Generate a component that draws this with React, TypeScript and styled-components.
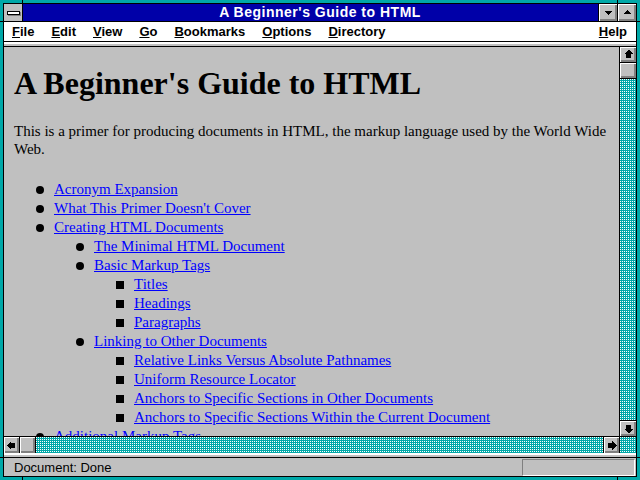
import * as React from 'react';
import styled, { createGlobalStyle, css } from 'styled-components';

const TEAL = '#00a8a8';
const GRAY = '#c0c0c0';
const DARK = '#808080';
const BLUE = '#0000a8';

const GlobalStyle = createGlobalStyle`
  html, body {
    margin: 0;
    padding: 0;
    overflow: hidden;
    background: ${TEAL};
  }
`;

type Item = { label: string; children?: Item[] };

const contents: Item[] = [
  { label: 'Acronym Expansion' },
  { label: "What This Primer Doesn't Cover" },
  {
    label: 'Creating HTML Documents',
    children: [
      { label: 'The Minimal HTML Document' },
      {
        label: 'Basic Markup Tags',
        children: [{ label: 'Titles' }, { label: 'Headings' }, { label: 'Paragraphs' }],
      },
      {
        label: 'Linking to Other Documents',
        children: [
          { label: 'Relative Links Versus Absolute Pathnames' },
          { label: 'Uniform Resource Locator' },
          { label: 'Anchors to Specific Sections in Other Documents' },
          { label: 'Anchors to Specific Sections Within the Current Document' },
        ],
      },
    ],
  },
  { label: 'Additional Markup Tags' },
];

const menus = ['File', 'Edit', 'View', 'Go', 'Bookmarks', 'Options', 'Directory'];

// win 3.1 style arrows, drawn on a 15x15 grid
const ScrollArrow = ({ dir }: { dir: 'up' | 'down' | 'left' | 'right' }) => {
  const rot = { up: 0, right: 90, down: 180, left: 270 }[dir];
  return (
    <svg width="15" height="15" viewBox="0 0 15 15" shapeRendering="crispEdges">
      <g transform={`rotate(${rot} 7.5 7.5)`}>
        <path d="M7.5 2.5 L12 7 L10 7 L10 11 L5 11 L5 7 L3 7 Z" fill="#000" />
      </g>
    </svg>
  );
};

const Triangle = ({ dir }: { dir: 'up' | 'down' }) => (
  <svg width="17" height="15" viewBox="0 0 17 15" shapeRendering="crispEdges">
    {dir === 'down' ? (
      <path d="M4.5 6 L12.5 6 L8.5 10 Z" fill="#000" />
    ) : (
      <path d="M8.5 5 L12.5 9 L4.5 9 Z" fill="#000" />
    )}
  </svg>
);

class App extends React.Component {
  renderList(items: Item[], level: number) {
    return (
      <List $level={level}>
        {items.map((item) => (
          <li key={item.label}>
            <Row>
              <Bullet $square={level >= 2} />
              <Link href="#">{item.label}</Link>
            </Row>
            {item.children && this.renderList(item.children, level + 1)}
          </li>
        ))}
      </List>
    );
  }

  render() {
    return (
      <Frame>
        <GlobalStyle />
        <Mark $v $x={22} $y={0} />
        <Mark $v $x={617} $y={0} />
        <Mark $v $x={22} $y={476} />
        <Mark $v $x={617} $y={476} />
        <Mark $x={0} $y={21} />
        <Mark $x={636} $y={21} />
        <Mark $x={0} $y={457} />
        <Mark $x={636} $y={457} />
        <Window>
          <TitleBar>
            <ControlBox>
              <ControlBar />
            </ControlBox>
            <Caption>A Beginner's Guide to HTML</Caption>
            <TitleButton>
              <Triangle dir="down" />
            </TitleButton>
            <TitleButton>
              <Triangle dir="up" />
            </TitleButton>
          </TitleBar>
          <MenuBar>
            {menus.map((m) => (
              <MenuItem key={m}>
                <u>{m[0]}</u>
                {m.slice(1)}
              </MenuItem>
            ))}
            <MenuItem $right>
              <u>H</u>elp
            </MenuItem>
          </MenuBar>
          <Divider />
          <Viewport>
            <Page>
              <Heading>A Beginner's Guide to HTML</Heading>
              <Intro>
                This is a primer for producing documents in HTML, the markup language used by the
                World Wide Web.
              </Intro>
              {this.renderList(contents, 0)}
            </Page>
            <VScroll>
              <ScrollButton $v>
                <ScrollArrow dir="up" />
              </ScrollButton>
              <Thumb $v />
              <Track />
              <ScrollButton $v $end>
                <ScrollArrow dir="down" />
              </ScrollButton>
            </VScroll>
            <HScroll>
              <ScrollButton>
                <ScrollArrow dir="left" />
              </ScrollButton>
              <Thumb />
              <Track />
              <ScrollButton $end>
                <ScrollArrow dir="right" />
              </ScrollButton>
            </HScroll>
            <Corner />
          </Viewport>
          <Divider />
          <StatusBar>
            <StatusText>Document: Done</StatusText>
            <Progress />
          </StatusBar>
        </Window>
      </Frame>
    );
  }
}

const bevel = css`
  background: ${GRAY};
  box-shadow: inset 1px 1px #fff, inset -1px -1px ${DARK}, inset -2px -2px ${DARK};
`;

// dithered scrollbar track: one white pixel in every 2x2 cell
const checker = css`
  background-color: ${TEAL};
  background-image: conic-gradient(at 1px 1px, ${TEAL} 0 75%, #fff 0);
  background-size: 2px 2px;
`;

const Frame = styled.div`
  position: relative;
  width: 640px;
  height: 480px;
  box-sizing: border-box;
  padding: 3px;
  background: ${TEAL};
`;

const Mark = styled.div<{ $v?: boolean; $x: number; $y: number }>`
  position: absolute;
  left: ${(p) => p.$x}px;
  top: ${(p) => p.$y}px;
  width: ${(p) => (p.$v ? 1 : 4)}px;
  height: ${(p) => (p.$v ? 4 : 1)}px;
  background: #000;
`;

const Window = styled.div`
  height: 100%;
  box-sizing: border-box;
  border: 1px solid #000;
  display: flex;
  flex-direction: column;
  background: ${GRAY};
`;

const TitleBar = styled.div`
  display: flex;
  height: 17px;
  border-bottom: 1px solid #000;
  background: ${BLUE};
  flex-shrink: 0;
`;

const ControlBox = styled.div`
  width: 18px;
  background: ${GRAY};
  border-right: 1px solid #000;
  display: flex;
  align-items: center;
  justify-content: center;
`;

const ControlBar = styled.div`
  width: 11px;
  height: 2px;
  background: #fff;
  border: 1px solid #000;
  box-shadow: 1px 1px ${DARK};
`;

const Caption = styled.div`
  flex: 1;
  color: #fff;
  font: bold 14px 'Liberation Sans', Arial, sans-serif;
  letter-spacing: 0.5px;
  line-height: 17px;
  text-align: center;
  padding-left: 19px;
  white-space: nowrap;
`;

const TitleButton = styled.div`
  width: 18px;
  border-left: 1px solid #000;
  display: flex;
  align-items: center;
  justify-content: center;
  ${bevel};
`;

const MenuBar = styled.div`
  display: flex;
  align-items: center;
  gap: 17px;
  height: 19px;
  padding: 0 9px 0 8px;
  background: #fff;
  border-bottom: 1px solid #000;
  flex-shrink: 0;
`;

const MenuItem = styled.span<{ $right?: boolean }>`
  font: bold 13px 'Liberation Sans', Arial, sans-serif;
  color: #000;
  line-height: 19px;
  ${(p) => p.$right && 'margin-left: auto;'}
`;

const Divider = styled.div`
  height: 4px;
  flex-shrink: 0;
  background: linear-gradient(#fff 0 2px, ${GRAY} 2px);
  border-bottom: 1px solid #000;
`;

const Viewport = styled.div`
  flex: 1;
  min-height: 0;
  display: grid;
  grid-template-columns: 1fr 17px;
  grid-template-rows: 1fr 17px;
`;

const Page = styled.div`
  overflow: hidden;
  padding: 0 10px;
  background: ${GRAY};
  font-family: 'Liberation Serif', 'Times New Roman', serif;
  color: #000;
`;

const Heading = styled.h1`
  margin: 18px 0 0;
  font-size: 32px;
  font-weight: bold;
  line-height: 36px;
  white-space: nowrap;
`;

const Intro = styled.p`
  margin: 21px 0 0;
  font-size: 15px;
  line-height: 18px;
`;

const List = styled.ul<{ $level: number }>`
  list-style: none;
  margin: ${(p) => (p.$level === 0 ? '22px 0 0' : '0')};
  padding: 0 0 0 ${(p) => (p.$level === 0 ? 22 : 40)}px;
`;

const Row = styled.div`
  display: flex;
  align-items: center;
  height: 19px;
  font-size: 15px;
  line-height: 19px;
  white-space: nowrap;
`;

const Bullet = styled.span<{ $square?: boolean }>`
  flex-shrink: 0;
  width: 8px;
  height: 8px;
  margin-right: 10px;
  background: #000;
  border-radius: ${(p) => (p.$square ? '0' : '50%')};
`;

const Link = styled.a`
  color: #0000ff;
  text-decoration: underline;
`;

const VScroll = styled.div`
  display: flex;
  flex-direction: column;
  border-left: 1px solid #000;
`;

const HScroll = styled.div`
  display: flex;
  border-top: 1px solid #000;
`;

const ScrollButton = styled.div<{ $v?: boolean; $end?: boolean }>`
  flex-shrink: 0;
  width: ${(p) => (p.$v ? 16 : 15)}px;
  height: ${(p) => (p.$v ? 15 : 16)}px;
  display: flex;
  align-items: center;
  justify-content: center;
  ${bevel};
  ${(p) =>
    p.$v
      ? p.$end
        ? 'border-top: 1px solid #000;'
        : 'border-bottom: 1px solid #000;'
      : p.$end
        ? 'border-left: 1px solid #000;'
        : 'border-right: 1px solid #000;'}
`;

const Thumb = styled.div<{ $v?: boolean }>`
  flex-shrink: 0;
  width: ${(p) => (p.$v ? 16 : 15)}px;
  height: ${(p) => (p.$v ? 15 : 16)}px;
  ${bevel};
  ${(p) => (p.$v ? 'border-bottom: 1px solid #000;' : 'border-right: 1px solid #000;')}
`;

const Track = styled.div`
  flex: 1;
  ${checker};
`;

const Corner = styled.div`
  border-top: 1px solid #000;
  border-left: 1px solid #000;
  ${checker};
`;

const StatusBar = styled.div`
  height: 18px;
  flex-shrink: 0;
  display: flex;
  align-items: center;
  padding: 0 1px 0 10px;
`;

const StatusText = styled.span`
  flex: 1;
  font: 13px 'Liberation Sans', Arial, sans-serif;
  color: #000;
`;

const Progress = styled.div`
  width: 111px;
  height: 15px;
  border: 1px solid;
  border-color: ${DARK} #fff #fff ${DARK};
`;

export default App;
